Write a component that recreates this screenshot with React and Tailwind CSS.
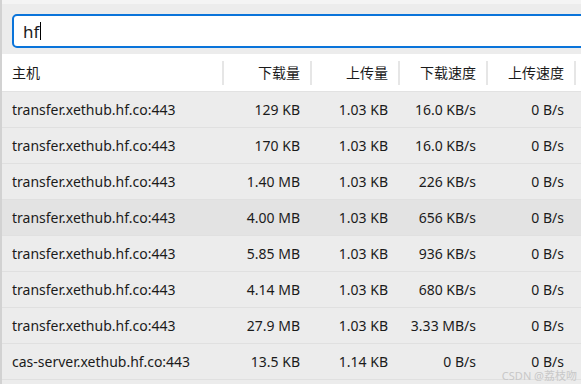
import React from "react";

const rows = [
  ["transfer.xethub.hf.co:443", "129 KB", "1.03 KB", "16.0 KB/s", "0 B/s"],
  ["transfer.xethub.hf.co:443", "170 KB", "1.03 KB", "16.0 KB/s", "0 B/s"],
  ["transfer.xethub.hf.co:443", "1.40 MB", "1.03 KB", "226 KB/s", "0 B/s"],
  ["transfer.xethub.hf.co:443", "4.00 MB", "1.03 KB", "656 KB/s", "0 B/s"],
  ["transfer.xethub.hf.co:443", "5.85 MB", "1.03 KB", "936 KB/s", "0 B/s"],
  ["transfer.xethub.hf.co:443", "4.14 MB", "1.03 KB", "680 KB/s", "0 B/s"],
  ["transfer.xethub.hf.co:443", "27.9 MB", "1.03 KB", "3.33 MB/s", "0 B/s"],
  ["cas-server.xethub.hf.co:443", "13.5 KB", "1.14 KB", "0 B/s", "0 B/s"],
];

const headers = ["下载量", "上传量", "下载速度", "上传速度"];

const font = { fontFamily: '"Noto Sans", "Noto Sans CJK SC", sans-serif' };

export default function App() {
  return (
    <div
      className="relative w-[581px] h-[384px] overflow-hidden bg-[#ececec] border-l-2 border-[#d2d2d2] text-[14px] text-[#1b1b1b]"
      style={font}
    >
      {/* top strip */}
      <div className="h-[4px] bg-[#f4f4f4]" />

      {/* search box */}
      <div className="pt-[10px] pb-[6px] pl-[10px] -mr-[20px]">
        <div className="h-[34px] rounded-[5px] border-2 border-[#0a74da] bg-white flex items-center pl-[9px]">
          <span className="text-[17px] leading-none">hf</span>
          <span className="w-px h-[18px] bg-black ml-px" />
        </div>
      </div>

      {/* header */}
      <div className="flex h-[38px] bg-white border-b border-[#e2e2e2] items-center">
        <div className="w-[220px] pl-[10px] h-full flex items-center">主机</div>
        {headers.map((h) => (
          <div key={h} className="w-[88px] h-full flex items-center">
            <div className="w-[2px] h-[24px] bg-[#e6e6e6]" />
            <div className="flex-1 text-right pr-[10px]">{h}</div>
          </div>
        ))}
        <div className="w-[2px] h-[24px] bg-[#e6e6e6]" />
      </div>

      {/* rows */}
      {rows.map((r, i) => (
        <div
          key={i}
          className={`flex h-[36px] items-center border-b border-[#e0e0e0] ${
            i === 3 ? "bg-[#e3e3e3]" : "bg-[#ececec]"
          }`}
        >
          <div className="w-[220px] pl-[10px]">{r[0]}</div>
          {r.slice(1).map((c, j) => (
            <div key={j} className="w-[88px] text-right pr-[10px]">
              {c}
            </div>
          ))}
        </div>
      ))}

      {/* watermark */}
      <div className="absolute right-[4px] bottom-[1px] text-[11px] leading-[14px] text-[#c8c8c8]">
        CSDN @荔枝吻
      </div>
    </div>
  );
}
